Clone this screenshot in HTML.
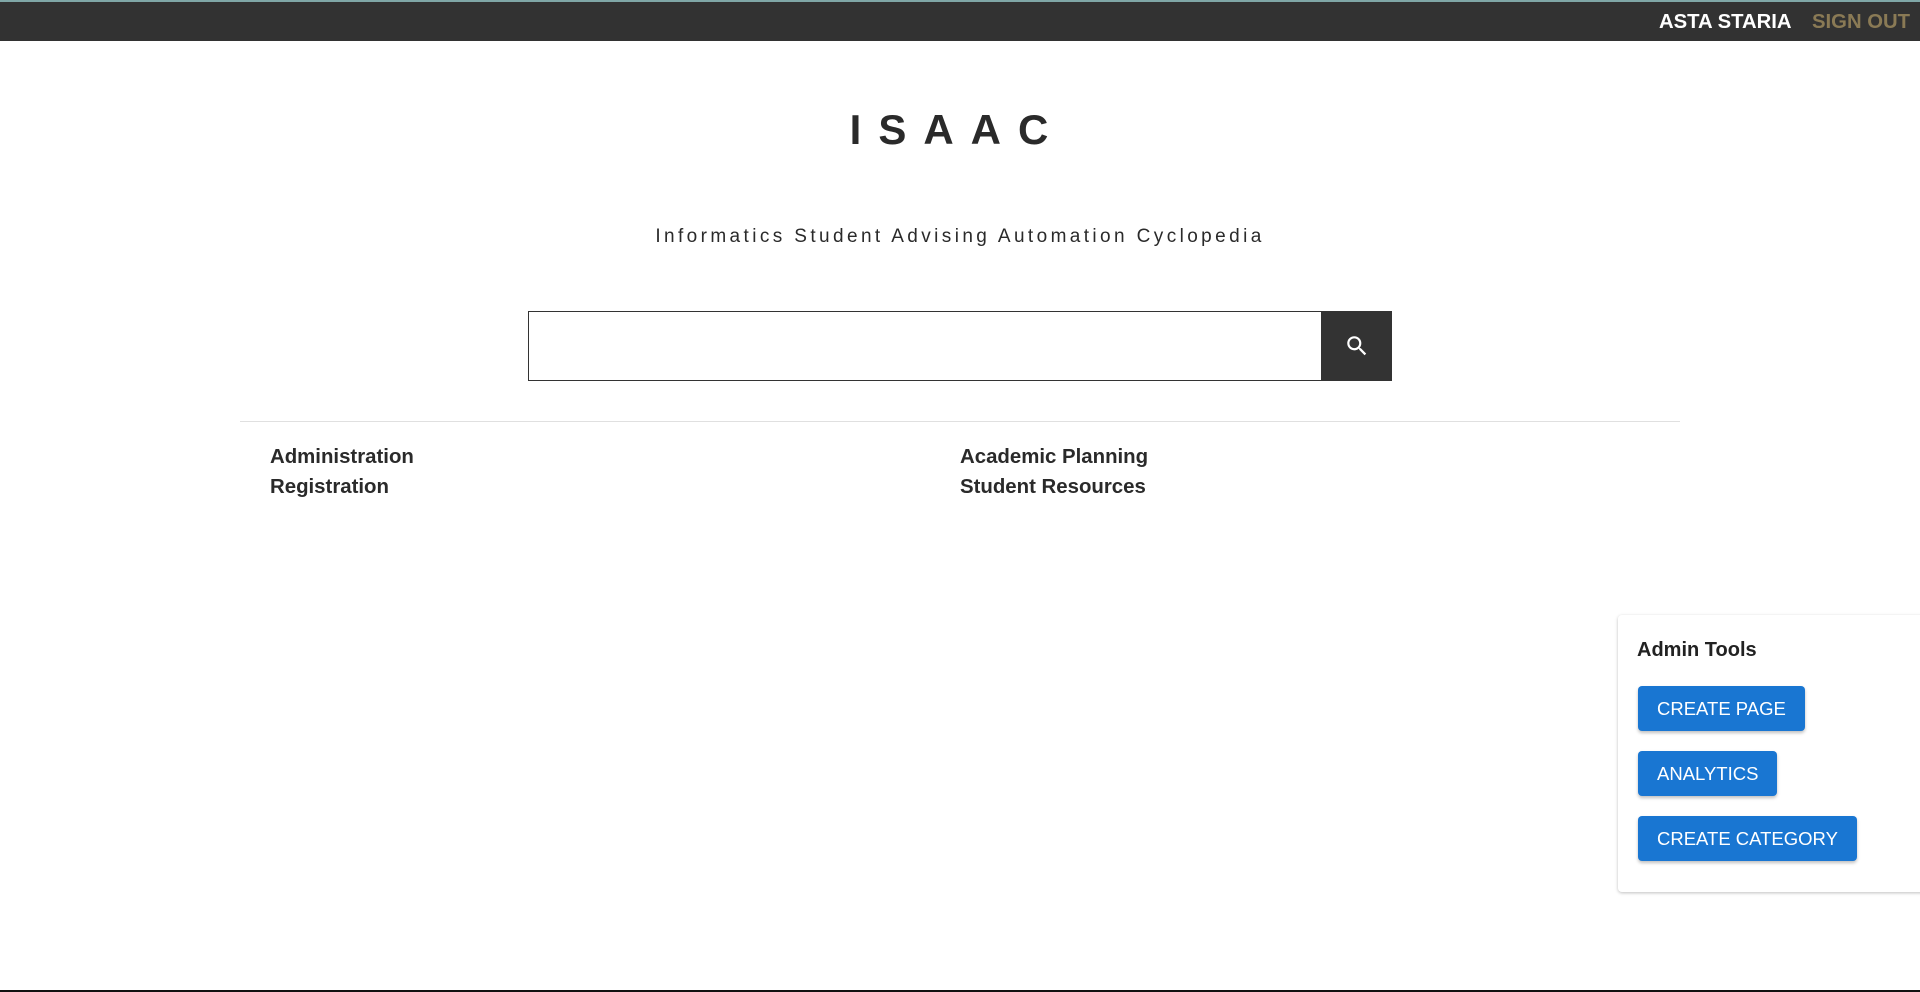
<!DOCTYPE html>
<html><head><meta charset="utf-8"><style>
*{margin:0;padding:0;box-sizing:border-box}
html,body{width:1920px;height:992px;overflow:hidden;background:#fff;font-family:"Liberation Sans",Arial,sans-serif;position:relative}
.top{position:absolute;left:0;top:0;width:1920px;height:41px;background:#323232;border-top:2px solid #7fa6a6}
.user{position:absolute;left:1659px;top:9px;color:#fff;font-weight:bold;font-size:20.3px}
.out{position:absolute;left:1812px;top:9px;color:#8a7a55;font-weight:bold;font-size:20.3px}
.title{position:absolute;left:-11px;width:1920px;top:106px;text-align:center;font-size:42px;font-weight:bold;color:#2a2a2a;letter-spacing:17px;text-indent:17px}
.sub{position:absolute;left:0;width:1920px;top:226px;text-align:center;font-size:19px;color:#2a2a2a;letter-spacing:3.4px}
.search{position:absolute;left:528px;top:311px;width:864px;height:70px;border:1px solid #333}
.btn{position:absolute;right:-1px;top:-1px;width:71px;height:70px;background:#333}
.btn svg{position:absolute;left:23px;top:22px}
.hr{position:absolute;left:240px;top:421px;width:1440px;height:1px;background:#e0e0e0}
.l{position:absolute;font-weight:bold;font-size:20.4px;color:#2a2a2a}
.panel{position:absolute;left:1618px;top:615px;width:310px;height:277px;background:#fff;border-radius:4px;box-shadow:0 1px 3px rgba(0,0,0,.25)}
.pt{position:absolute;left:19px;top:24px;font-weight:bold;font-size:20px;color:#222}
.b{position:absolute;left:20px;height:45px;background:#1976d2;color:#fff;font-size:18.5px;line-height:45px;padding:0 19px;border-radius:4px;box-shadow:0 2px 3px rgba(0,0,0,.25)}
.bot{position:absolute;left:0;top:990px;width:1920px;height:2px;background:#111}
</style></head><body>
<div class="top"><span class="user">ASTA STARIA</span><span class="out">SIGN OUT</span></div>
<div class="title">ISAAC</div>
<div class="sub">Informatics Student Advising Automation Cyclopedia</div>
<div class="search"><div class="btn"><svg width="26" height="26" viewBox="0 0 24 24"><path fill="#fff" d="M15.5 14h-.79l-.28-.27A6.47 6.47 0 0 0 16 9.5 6.5 6.5 0 1 0 9.5 16c1.61 0 3.09-.59 4.23-1.57l.27.28v.79l5 4.99L20.49 19l-4.99-5zm-6 0C7.01 14 5 11.990 5 9.5S7.01 5 9.5 5 14 7.01 14 9.5 11.99 14 9.5 14z"/></svg></div></div>
<div class="hr"></div>
<div class="l" style="left:270px;top:446px">Administration</div>
<div class="l" style="left:270px;top:476px">Registration</div>
<div class="l" style="left:960px;top:446px">Academic Planning</div>
<div class="l" style="left:960px;top:476px">Student Resources</div>
<div class="panel">
<div class="pt">Admin Tools</div>
<div class="b" style="top:71px">CREATE PAGE</div>
<div class="b" style="top:136px">ANALYTICS</div>
<div class="b" style="top:201px">CREATE CATEGORY</div>
</div>
<div class="bot"></div>
</body></html>
